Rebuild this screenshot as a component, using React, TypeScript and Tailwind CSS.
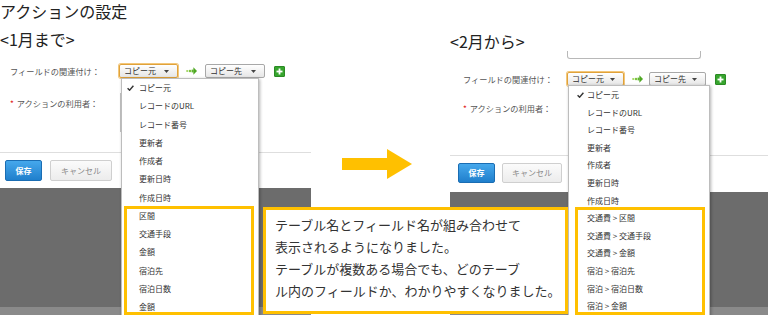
import React from "react";

const leftItems = ["レコードのURL", "レコード番号", "更新者", "作成者", "更新日時", "作成日時", "区間", "交通手段", "金額", "宿泊先", "宿泊日数", "金額"];
const rightItems = ["レコードのURL", "レコード番号", "更新者", "作成者", "更新日時", "作成日時", "交通費 > 区間", "交通費 > 交通手段", "交通費 > 金額", "宿泊 > 宿泊先", "宿泊 > 宿泊日数", "宿泊 > 金額"];

function Caret() {
  return (
    <svg className="w-[5px] h-[3px]" viewBox="0 0 5 3">
      <polygon points="0,0 5,0 2.5,3" fill="#444" />
    </svg>
  );
}

function SelectBox({ label, active, w }: { label: string; active?: boolean; w: string }) {
  return (
    <div
      className={
        "h-[14px] flex items-center justify-between pl-[4px] pr-[8px] rounded-[2px] bg-gradient-to-b from-white to-[#e6e6e6] text-[8px] leading-[12px] text-[#333] " +
        w +
        (active ? " border border-[#e0a23a] shadow-[0_0_0_1px_#f3c77a]" : " border border-[#a8a8a8]")
      }
    >
      <span>{label}</span>
      <Caret />
    </div>
  );
}

function FlowArrow() {
  return (
    <svg className="w-[11px] h-[8px]" viewBox="0 0 11 8">
      <circle cx="1.2" cy="4" r="1.1" fill="#9ed45a" />
      <circle cx="4" cy="4" r="1.3" fill="#7cc43e" />
      <rect x="5.6" y="2.6" width="2" height="2.8" fill="#5fb52c" />
      <polygon points="7.4,0.3 11,4 7.4,7.7" fill="#4ea723" />
    </svg>
  );
}

function PlusButton() {
  return (
    <div className="w-[11px] h-[11px] rounded-[1px] bg-[#37a52e] border border-[#2b8a24] flex items-center justify-center">
      <svg className="w-[7px] h-[7px]" viewBox="0 0 7 7">
        <rect x="2.6" y="0.5" width="1.8" height="6" fill="#fff" />
        <rect x="0.5" y="2.6" width="6" height="1.8" fill="#fff" />
      </svg>
    </div>
  );
}

function Check() {
  return (
    <svg className="w-[7px] h-[6px]" viewBox="0 0 7 6">
      <path d="M0.6 3.2 L2.6 5.2 L6.4 0.8" stroke="#333" strokeWidth="1.4" fill="none" />
    </svg>
  );
}

function Buttons({ saveW, cancelW, gap, h }: { saveW: string; cancelW: string; gap: string; h: string }) {
  return (
    <div className={"flex " + gap}>
      <div className={"flex items-center justify-center rounded-[2px] border border-[#1a6db3] bg-gradient-to-b from-[#45a8ec] to-[#1f7fcc] text-white font-bold text-[8px] " + saveW + " " + h}>
        保存
      </div>
      <div className={"flex items-center justify-center rounded-[2px] border border-[#cfcfcf] bg-gradient-to-b from-[#fbfbfb] to-[#ececec] text-[#8a8a8a] text-[8px] " + cancelW + " " + h}>
        キャンセル
      </div>
    </div>
  );
}

export default function App() {
  return (
    <div className="relative w-[768px] h-[315px] overflow-hidden bg-white font-['Noto_Sans_CJK_JP',sans-serif] text-[#222]">
      <div className="flex h-full">
        {/* before */}
        <div className="relative w-[311px] h-full flex flex-col">
          <div className="pt-[1px] text-[16px] leading-[20px] whitespace-nowrap">アクションの設定</div>
          <div className="mt-[7px] text-[16px] leading-[22px]">&lt;1月まで&gt;</div>
          <div className="mt-[14px] h-[14px] flex items-center">
            <div className="w-[119px] pl-[10px] text-[8.2px] text-[#555] whitespace-nowrap">フィールドの関連付け：</div>
            <SelectBox label="コピー元" active w="w-[59px]" />
            <div className="ml-[8px] mr-[8px]"><FlowArrow /></div>
            <SelectBox label="コピー先" w="w-[60px]" />
            <div className="ml-[9px]"><PlusButton /></div>
          </div>
          <div className="mt-[15px] flex items-start">
            <div className="w-[120px] pl-[10px] mt-[3px] leading-[14px] text-[8.2px] text-[#555] whitespace-nowrap">
              <span className="text-[#e02020] mr-[3px]">*</span>アクションの利用者：
            </div>
            <div className="w-[136px] h-[39px] border border-[#c4c4c4]" />
          </div>
          <div className="mt-[20px] border-t border-[#dedede]" />
          <div className="mt-[7px] pl-[5px]">
            <Buttons saveW="w-[37px]" cancelW="w-[62px]" gap="gap-[8px]" h="h-[21px]" />
          </div>
          <div className="mt-[7px] flex-1 flex flex-col bg-[#6c6c6c]">
            <div className="flex-1" />
            <div className="h-[8px] bg-[#8a8a8a]" />
          </div>

          <div className="absolute left-[121px] top-[78px] w-[138px] h-[260px] bg-white border border-[#bdbdbd] shadow-[1px_1px_3px_rgba(0,0,0,0.3)] text-[8px] text-[#333]">
            <div className="h-[18.25px] flex items-center pl-[5px]">
              <Check />
              <span className="ml-[5px]">コピー元</span>
            </div>
            {leftItems.map((t, i) => (
              <div key={i} className="h-[18.25px] leading-[18.25px] pl-[17px] whitespace-nowrap">{t}</div>
            ))}
            <div className="absolute left-[2px] top-[127px] w-[130px] h-[109px] border-[3px] border-[#ffc000]" />
          </div>
        </div>

        {/* arrow */}
        <div className="w-[139px] h-full pt-[148px] pl-[31px]">
          <svg className="w-[71px] h-[32px]" viewBox="0 0 71 32">
            <rect x="0" y="10" width="46" height="12" fill="#ffc000" />
            <polygon points="45,1 70,16 45,31" fill="#ffc000" />
          </svg>
        </div>

        {/* after */}
        <div className="relative w-[318px] h-full flex flex-col">
          <div className="h-[60px] flex">
            <div className="w-[117px] pt-[30px] text-[16px] leading-[22px] whitespace-nowrap">&lt;2月から&gt;</div>
            <div className="self-end mb-[1px] w-[134px] h-[8px] border border-t-0 border-[#b8b8b8] rounded-b-[3px]" />
          </div>
          <div className="mt-[12px] h-[14px] flex items-center">
            <div className="w-[117px] pl-[13px] text-[8.2px] text-[#555] whitespace-nowrap">フィールドの関連付け：</div>
            <SelectBox label="コピー元" active w="w-[57px]" />
            <div className="ml-[8px] mr-[6px]"><FlowArrow /></div>
            <SelectBox label="コピー先" w="w-[57px]" />
            <div className="ml-[9px]"><PlusButton /></div>
          </div>
          <div className="mt-[14px] flex items-start">
            <div className="w-[118px] pl-[13px] mt-[1px] leading-[14px] text-[8.2px] text-[#555] whitespace-nowrap">
              <span className="text-[#e02020] mr-[3px]">*</span>アクションの利用者：
            </div>
            <div className="w-[136px] h-[35px] border border-[#c4c4c4]" />
          </div>
          <div className="mt-[20px] border-t border-[#dedede]" />
          <div className="mt-[7px] pl-[8px]">
            <Buttons saveW="w-[37px]" cancelW="w-[60px]" gap="gap-[7px]" h="h-[20px]" />
          </div>
          <div className="mt-[9px] flex-1 flex flex-col bg-[#6c6c6c]">
            <div className="flex-1" />
            <div className="h-[8px] bg-[#8a8a8a]" />
          </div>

          <div className="absolute left-[118px] top-[85px] w-[142px] h-[250px] bg-white border border-[#bdbdbd] shadow-[1px_1px_3px_rgba(0,0,0,0.3)] text-[8px] text-[#333]">
            <div className="h-[17.6px] flex items-center pl-[8px]">
              <Check />
              <span className="ml-[3px]">コピー元</span>
            </div>
            {rightItems.map((t, i) => (
              <div key={i} className="h-[17.6px] leading-[17.6px] pl-[18px] whitespace-nowrap">{t}</div>
            ))}
            <div className="absolute left-[6px] top-[121px] w-[130px] h-[108px] border-[3px] border-[#ffc000]" />
          </div>
        </div>
      </div>

      <div className="absolute left-[263px] top-[207px] w-[305px] h-[107px] bg-white border-[3px] border-[#ffc000] pl-[9px] pt-[4px] text-[13px] leading-[22px] text-[#333]">
        <p>テーブル名とフィールド名が組み合わせて</p>
        <p>表示されるようになりました。</p>
        <p>テーブルが複数ある場合でも、どのテーブ</p>
        <p>ル内のフィールドか、わかりやすくなりました。</p>
      </div>
    </div>
  );
}
